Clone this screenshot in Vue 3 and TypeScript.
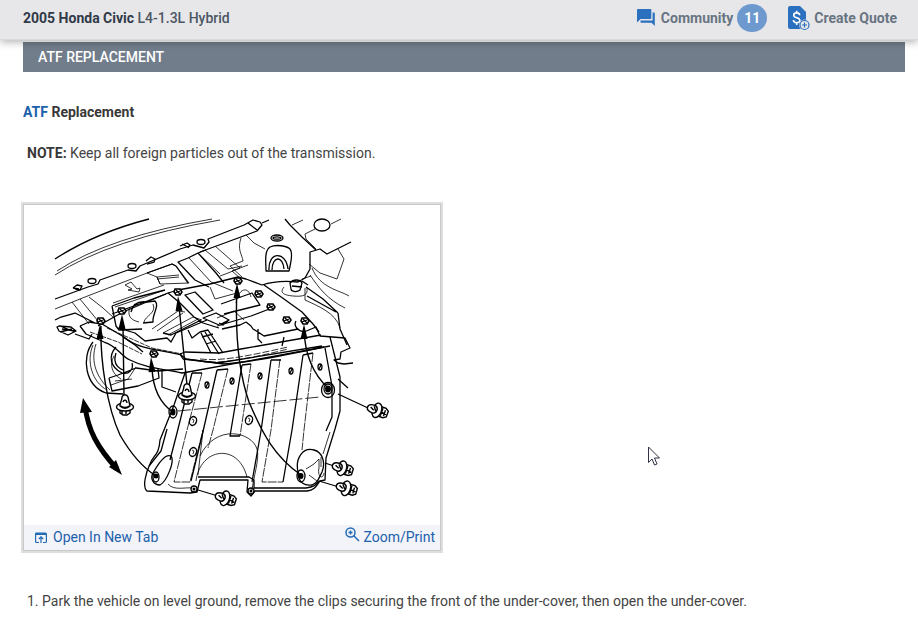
<script setup lang="ts">
interface Point { x: number; y: number }
interface Pin extends Point { turn: number }

const year = '2005 Honda Civic'
const engine = 'L4-1.3L Hybrid'
const communityCount = 11

const uprightClips: Point[] = [{ x: 125, y: 406 }, { x: 187, y: 395 }]
const sideClips: Pin[] = [
  { x: 376, y: 410, turn: 20 },
  { x: 341, y: 468, turn: 18 },
  { x: 345, y: 488, turn: 16 },
  { x: 224, y: 498, turn: 18 },
]
const holes: Point[] = [
  { x: 207, y: 385 }, { x: 232, y: 381 }, { x: 260, y: 376 },
  { x: 291, y: 371 }, { x: 320, y: 367 },
]
const rings: Point[] = [{ x: 193, y: 421 }, { x: 249, y: 420 }, { x: 193, y: 452 }]
const nuts: Point[] = [
  { x: 259, y: 294 }, { x: 271, y: 307 }, { x: 287, y: 320 },
  { x: 238, y: 281 }, { x: 178, y: 292 }, { x: 122, y: 311 },
  { x: 101, y: 321 }, { x: 154, y: 354 }, { x: 305, y: 321 },
]
const arrowHeads: Pin[] = [
  { x: 100, y: 324, turn: 0 }, { x: 122, y: 314, turn: 0 },
  { x: 151, y: 357, turn: -4 }, { x: 178, y: 296, turn: -4 },
  { x: 237, y: 283, turn: 0 }, { x: 304, y: 324, turn: 0 },
]
</script>

<template>
  <div class="page">
    <header class="topbar">
      <div class="vehicle"><strong>{{ year }}</strong> {{ engine }}</div>
      <nav class="actions">
        <a class="action" href="#community">
          <svg class="chat-icon" viewBox="0 0 18 18" aria-hidden="true">
            <path fill="#2a70bf" d="M1 0h12.500a.8.800 0 0 1 .8.800v8.400a.8.800 0 0 1-.8.800H3.500L0 13.500V1a1 1 0 0 1 1-1zM15.600 3.500H17a.8.800 0 0 1 .8.800V17l-3.300-3.300H4.300a.8.800 0 0 1-.8-.8v-1.300h12.100z" />
          </svg>
          <span>Community</span>
          <span class="badge">{{ communityCount }}</span>
        </a>
        <a class="action quote" href="#quote">
          <svg class="quote-icon" viewBox="0 0 23 25" aria-hidden="true">
            <path fill="#2a70bf" d="M3 0h10l6 6v17H3a2 2 0 0 1-2-2V2a2 2 0 0 1 2-2z" />
            <path fill="none" stroke="#fff" stroke-width="1.600" d="M12.700 9.200c-.2-3.200-6-3-6 .1 0 3.300 6.100 1.800 6.100 5.100 0 3.200-6.300 3.200-6.400-.4M9.700 4.800v2.300m0 9.500v2.300" />
            <circle cx="17.500" cy="19" r="5.500" fill="#e7e7e9" />
            <circle cx="17.500" cy="19" r="4.500" fill="#e7e7e9" stroke="#2a70bf" stroke-width="1.200" />
            <path stroke="#2a70bf" stroke-width="1.200" d="M17.500 16.500v5M15 19h5" />
          </svg>
          <span>Create Quote</span>
        </a>
      </nav>
    </header>

    <main class="content">
      <h1 class="section-title">ATF REPLACEMENT</h1>
      <h2 class="subtitle"><a href="#atf">ATF</a> Replacement</h2>
      <p class="note"><strong>NOTE:</strong> Keep all foreign particles out of the transmission.</p>

      <figure class="figure">
        <svg class="diagram" viewBox="24 205 416 320" role="img" aria-label="Under-cover removal diagram">
          <g class="thin">
            <path d="M55 275Q110 239 220 220M57 271Q108 237 212 219" />
            <path d="M55 309L85 297 147 273M147 273l25-9 4 2 13 17-29 1-3-7-10-4M157 277l22-2M157 279l22-2M160 284l-3-7" />
            <path d="M72 302l17 22M80 299l18 22M89 297l14 11 11 10" />
            <path d="M125 285l6-3 6 7 3-1-1 4-11-2 4-1-7-4" />
            <path d="M113 303l51-18M115 307l50-17M130 307c-3 8 0 13 9 15M153 304c4 9-8 12-9 18" />
            <path d="M189 258l22 24 22 9M198 253l22 21M205 250l23 19 14-3M215 246l25 22M240 268l-12 5-8 3M210 287l5 12 22-6" />
            <path d="M246 235l8 8 11 6M241 238c-4 12 1 16 2 23l-13 5 12 11M248 265l-16 6 9 8" />
            <path d="M292 225l11-5M331 224l10-5M315 229l-10 5 1 5 10 10" />
            <path d="M338 249l6 10-7 20-17-6-11-9M312 268c8 20 27 22 37 28M310 275c9 13 17 24 35 33M305 288v12c13 6 31 13 35 28" />
            <path d="M284 287c-4 5-2 8 9 9s15-1 14-8M302 279l9-3M236 303c2-14 12-18 15-6" />
            <path d="M152 329l26-18 7 1M157 331l26-18M163 333l30-16 9 3M168 335l30-16M217 318l17-7 10 9" />
            <path d="M107 328l45 20 30 6M90 332l28 10 24 12" stroke-dasharray="5 1" />
            <path d="M200 361c15 4 53-3 88-12M200 359c25 3 60-6 88-12" stroke-dasharray="7 2" />
            <path d="M93 345c-7 16-1 37 14 45M96 344c-6 18 1 34 14 46M114 356c-5 9-2 18 7 23M111 385l17-6 8-12M115 381l17-2" />
            <path d="M202 373l-15 57-13 52h16l13-52M228 369l-15 61-5 18M251 364l-11 72M280 359l-9 71-9 52h21M313 353l-9 77-2 20" stroke-dasharray="9 1" />
            <path d="M196 481c4-33 42-39 51-4M200 456c16-33 52-24 57-7 3 9-4 30-5 41M168 484c6 7 17 3 24 4M203 430l-5 45" />
            <path d="M178 411l142-14" stroke-dasharray="13 3" />
            <path d="M306 469l8-5 5-5 0 9c-2 9 4 12 5 5M309 475l8 6M321 457v10M330 432l-7 22" />
          </g>

          <g class="line">
            <path d="M55 259Q95 233 149 219" />
            <path d="M55 299L88 287 98 284 100 280 128 270 136 271 140 266 180 249 193 245 204 248 209 242 208 239 244 225 253 220 260 222 262 225 257 231 230 241 200 252" />
            <path d="M262 223l7-3M248 223l9 7" />
            <path d="M73 288l4-3 5 1-2 4-5-1M146 261l5-4 4 2-1 3-7 2M180 246l7-3 3 2-2 3M73 288l6 1M182 244l6 3" />
            <ellipse cx="92" cy="281" rx="4" ry="2.500" /><ellipse cx="132" cy="266" rx="4" ry="2.500" /><ellipse cx="201" cy="242" rx="4" ry="2.500" />
            <path d="M147 273l25-9 4 2 12 17" />
            <path d="M188 258l-10 4 17 18 14 7M198 253l8-3M198 253l18 20 8 10M178 262l10-4 10-5" />
            <path d="M98 326l25-14 45-19 10-3 32-6 28-7 8 2 16 6c12-4 26-4 36-3l7-4 5-9V252l10-3 7 5 24-12" />
            <path d="M285 219l5 6 12 12 14 13" />
            <path d="M264 285l20 14 18 13 11 12 6 8" />
            <path d="M306 287l17 12 15 14M338 313l2 16 7 16M307 296l29 16" />
            <ellipse cx="277" cy="238" rx="6" ry="3" /><ellipse cx="277" cy="238" rx="4" ry="1.200" />
            <path d="M266 271c0-9-2-20 4-24 6-3 17-1 20 2 4 5 0 16-1 22zM269 270c-1-19 17-19 19-1M272 270c0-14 11-15 12-1" />
            <path d="M290 283c3-4 10-4 12 0l-2 7c-4 3-9 1-9-1zM292 286l10 1M302 281l6 4" />
            <path d="M55 320l6-3 14-4 20 10M59 326l12 1 5 4-8 4-9-4-2-4zM60 326l15 6M62 329l13 2M60 332l12-3M75 334l14 5 3-5M80 326l9-4 13 2 22 13c16 14 41 13 57 18l5 4 38 5c28-2 67-10 100-17" />
            <path d="M80 326l6 8 18 8c14 4 16 14 26 18 18 9 34 9 52 13l6-1 142-26M183 359l-3-5 5-2 34 1 22-4 80-14M183 359l35 4 104-17" />
            <path d="M112 306l4 20 3 4 23-1M112 306l22-8 31-8M112 314l30-11 24-9M131 312c2-9 9-11 16-10l8-1c5 5-3 13-2 21l-10 1M118 328l17 5 10 8 22-3 4 4 5-9 31-13M123 337l12 8 8 7" />
            <path d="M163 333l8 2 30-15M185 295l10-3 18 18-10 4zM203 318l13-5 13 7-10 5zM229 320l-6 5-4-2M221 304l31-11 8 12-36 9M217 326l34-10 21-8M168 293l12 10 14 14 9 6 16 5" />
            <path d="M188 330l4 8 8-6 8-2 15 23M201 333l10 20M205 332l14 22M202 337l11-3M206 344l10-3M222 329l18-4 6-3" />
            <path d="M246 322l5 4 2 3 5 3 6 4 34-7M258 329v10l4 4M284 337l-2 9M296 321c-3 5 2 10 8 11l12-5 4 9 25 2 5 10-9 4-1 7-6 1 4 3 6 1 9-1" />
            <path d="M93 342c-12 15-8 44 13 51l17 1M116 347c-8 9-6 20 6 26 7 2 12-4 10-10M116 353c-3 9 0 14 7 17M109 378l9-3 18-7 22 3 25-2M109 378l3 13 26-5 21-8-1-9M162 370v17l14 5" />
            <path d="M185 373l-11 32-14 35c-1 16-7 15-10 24-4 8-8 23-3 27l43 2 7-1 3-12h48l-1 12 4 4 4-5h52c9-1 10-7 13-10l5-1 1-22 9-29 5-18v-34l-10-40" />
            <path d="M198 477h51l5 3v8h52c8-1 10-3 13-7M149 466l12-15 6-22M326 431l6-14v-31l-7-38" />
            <path d="M192 373l-15 60-7 27M192 373h10M217 370l-15 66-11 45M217 370l11-1M242 365l-12 71h10M242 365l9-1M271 360l-10 71-9 51M271 360h10M303 355l-11 75-9 52M303 355l10-2" />
            <path d="M153 473c5-9 12-20 18-17 4 5-4 25-11 29-7 0-10-7-7-12M298 472c-3-14 5-25 16-22 8 2 12 12 8 22-4 8-4 10-10 13-7 1-14-2-14-13" />
            <path d="M338 394l30 14M319 481l20 6M325 463l9 3M198 490l20 6M338 379l10 9" />
          </g>

          <g class="guide">
            <path d="M101 326C100 360 107 407 120 435Q136 463 156 476M123 325l1 71M152 368C153 391 161 404 173 412M179 306l8 79M237 288C235 331 238 370 249 402 263 435 275 457 301 475M304 330C305 354 313 374 328 388" />
          </g>

          <ellipse class="line" cx="322" cy="225" rx="8" ry="6" />
          <g v-for="(p, i) in arrowHeads" :key="'a' + i" :transform="`translate(${p.x} ${p.y}) rotate(${p.turn})`">
            <path d="M0 0l3.500 15h-7z" />
          </g>
          <g v-for="(p, i) in nuts" :key="'n' + i" :transform="`translate(${p.x} ${p.y})`">
            <path class="nut" d="M-3-3h5l2 3-2 3h-4l-2-3z" /><path class="line" d="M-2-2l4 4M-3 1l5-2" />
          </g>
          <g v-for="(p, i) in holes" :key="'h' + i" :transform="`translate(${p.x} ${p.y})`">
            <ellipse class="line" rx="2" ry="3" /><path class="line" d="M-1 2l2-4" />
          </g>
          <g v-for="(p, i) in rings" :key="'r' + i" :transform="`translate(${p.x} ${p.y})`">
            <ellipse class="shape" rx="3.500" ry="4.500" transform="rotate(18)" /><path class="thin" d="M-1-2l2 1-1 3" />
          </g>
          <g class="line">
            <ellipse cx="173" cy="412" rx="4" ry="6" /><ellipse cx="328" cy="390" rx="6.500" ry="7.500" />
            <ellipse cx="301" cy="476" rx="4" ry="6" /><ellipse cx="156" cy="477" rx="3" ry="5" />
            <circle cx="194" cy="489" r="3" /><circle cx="251" cy="491" r="3" />
            <ellipse cx="328" cy="389" rx="4" ry="5" />
          </g>
          <ellipse cx="173" cy="412" rx="2.500" ry="3.500" /><ellipse cx="328" cy="389" rx="3" ry="3.500" />
          <ellipse cx="301" cy="476" rx="2.500" ry="3" /><circle cx="156" cy="476" r="2.500" />
          <circle cx="194" cy="489" r="1.500" /><circle cx="251" cy="491" r="1.500" />

          <g v-for="(p, i) in uprightClips" :key="'u' + i" class="shape" :transform="`translate(${p.x} ${p.y})`">
            <path d="M-5 2v5l3 2h4l3-2V2z" /><ellipse cy="1" rx="8.500" ry="4" />
            <path d="M-5 0c0-4 2-5 2-9 1-3 5-3 6 0l2 9c-3 3-7 3-10 0zM-2-4c1-3 4-2 4 1M-4 0c2 2 6 2 8 0M-3 5v3M1 5v3" />
          </g>
          <g v-for="(p, i) in sideClips" :key="'s' + i" class="shape" :transform="`translate(${p.x} ${p.y}) rotate(${p.turn})`">
            <path d="M3-5h6l3 2v6l-3 2H3zM6-4v8M9-3v6M6 0l5 1" /><ellipse cx="1" rx="4.500" ry="7.500" />
            <path d="M-9 0c0-3 3-4 7-4 4 1 4 7 0 8-4 0-7-1-7-4zM-6-1l4 2M-3-3l3 4" />
          </g>
          <path class="swing" d="M85 406C88 430 97 447 117 469" />
          <path d="M83 398l9 14-12 1zM122 475l-13-8 7-7z" />
        </svg>
        <figcaption class="figure-bar">
          <a class="figure-link" href="#open">
            <svg class="tab-icon" viewBox="0 0 12 12" aria-hidden="true">
              <path fill="none" stroke="#236bb5" stroke-width="1.200" d="M4 10.500H1.600a1 1 0 0 1-1-1v-7.500a1 1 0 0 1 1-1h8.800a1 1 0 0 1 1 1v7.500a1 1 0 0 1-1 1H8M6 11V5M3.800 7L6 4.800 8.200 7" />
              <path fill="#236bb5" d="M1 1h10v2H1z" />
            </svg>
            <span>Open In New Tab</span>
          </a>
          <a class="figure-link zoom" href="#zoom">
            <svg class="lens-icon" viewBox="0 0 15 15" aria-hidden="true">
              <path fill="none" stroke="#236bb5" stroke-width="1.500" d="M10 5.500a4.500 4.500 0 1 1-9 0 4.500 4.500 0 0 1 9 0zM9 9l5 5M5.500 3.500v4M3.500 5.500h4" />
            </svg>
            <span>Zoom/Print</span>
          </a>
        </figcaption>
      </figure>

      <p class="step">1. Park the vehicle on level ground, remove the clips securing the front of the under-cover, then open the under-cover.</p>
    </main>

    <svg class="pointer" viewBox="0 0 14 20" aria-hidden="true">
      <path fill="#fff" stroke="#303047" d="M1.500 1v15.500l3.500-3.500 2.500 6 2.500-1-2.500-6h5z" />
    </svg>
  </div>
</template>

<style>
body { margin: 0; background: #fff; }
</style>

<style scoped>
.page { position: relative; font: 14px/20px Roboto, sans-serif; color: #444; }
a { color: #1b60ab; text-decoration: none; }
.topbar {
  position: relative;
  display: flex;
  align-items: center;
  justify-content: space-between;
  box-sizing: border-box;
  height: 40px;
  padding: 0 21px 3px 23px;
  background: #e7e7e9;
  border-bottom: 1px solid #d9d9d9;
  box-shadow: 0 2px 8px rgba(0, 0, 0, 0.3);
}
.vehicle { color: #4c5664; font-weight: 500; }
.vehicle strong { color: #303a48; font-weight: 700; }
.actions { display: flex; gap: 20px; }
.action { display: flex; align-items: center; color: #687482; font-weight: 700; }
.chat-icon { width: 18px; height: 18px; margin-right: 6px; }
.badge {
  width: 30px;
  margin-left: 4px;
  border-radius: 50%;
  background: #6d99cf;
  color: #fff;
  line-height: 28px;
  text-align: center;
}
.quote-icon { width: 23px; height: 25px; margin-right: 4px; }
.content { padding: 2px 13px 24px 23px; }
.section-title {
  margin: 0;
  padding: 0 15px;
  background: #717d8b;
  color: #fff;
  font-size: 14px;
  line-height: 30px;
  font-weight: 500;
}
.subtitle { margin: 30px 0 0; font-size: 14px; font-weight: 700; color: #383838; }
.note { margin: 21px 4px 0; }
.note strong { font-weight: 700; color: #383838; }
.figure {
  width: 416px;
  max-width: 100%;
  margin: 41px 0 0;
  border: 1px solid #c8c8c8;
  box-shadow: 0 0 0 2px #dedede;
}
.diagram { display: block; width: 100%; height: auto; }
.figure-bar {
  display: flex;
  align-items: center;
  justify-content: space-between;
  padding: 0 5px 0 11px;
  background: #f3f4f9;
  line-height: 25px;
}
.figure-link { display: flex; align-items: center; gap: 6px; }
.zoom { gap: 3px; }
.tab-icon { width: 12px; height: 12px; }
.lens-icon { width: 15px; height: 15px; margin-bottom: 6px; }
.step { margin: 40px 4px 0; }
.thin, .line, .guide, .swing { fill: none; stroke: #000; }
.thin { stroke-width: 0.8; }
.line { stroke-width: 1.3; stroke-linejoin: round; }
.guide { stroke-width: 1.4; }
.shape { fill: #fff; stroke: #000; stroke-width: 1.4; }
.nut { fill: #fff; stroke: #000; stroke-width: 1.6; }
.swing { stroke-width: 5; }
.pointer { position: absolute; left: 647px; top: 446px; width: 14px; height: 20px; }
</style>
